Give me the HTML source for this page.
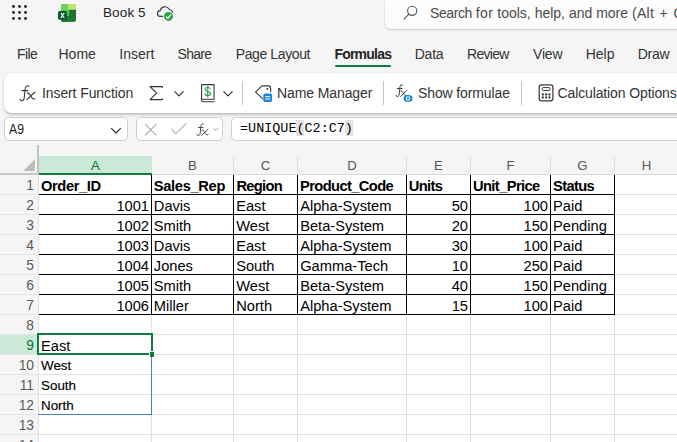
<!DOCTYPE html>
<html>
<head>
<meta charset="utf-8">
<style>
*{box-sizing:border-box;margin:0;padding:0}
html,body{width:677px;height:442px;overflow:hidden;background:#f5f5f5;font-family:"Liberation Sans",sans-serif;}
.abs{position:absolute}
#root{position:relative;width:677px;height:442px;overflow:hidden;background:#f5f5f5}
.t{position:absolute;white-space:nowrap;color:#242424;line-height:1}
.tab{font-size:14px;top:46.5px;color:#333}
.rb{font-size:14px;top:86px;color:#333;letter-spacing:-0.1px}
.ch{position:absolute;top:156px;height:18px;font-size:13.2px;color:#555;text-align:center;line-height:19px;padding-left:1px}
.rh{position:absolute;left:0;width:34px;text-align:right;font-size:13.8px;color:#5a5a5a;height:20px;line-height:21px}
.vl{position:absolute;width:1px;background:#e1e1e1;top:175px;height:270px}
.hl{position:absolute;height:1px;background:#e1e1e1;left:39px;width:640px}
.c{position:absolute;font-size:14.67px;color:#000;height:20px;line-height:22px;white-space:nowrap;transform:scaleY(1.045);transform-origin:0 16px}
.b{font-weight:bold;letter-spacing:-0.45px}
.r{text-align:right}
.bk{position:absolute;background:#000}
.s{font-size:13.4px;-webkit-text-stroke:0.15px #000;transform:none}
</style>
</head>
<body>
<div id="root">

<!-- title bar -->
<svg class="abs" style="left:10px;top:4.2px" width="20" height="18" viewBox="0 0 20 18">
 <g fill="#242424">
  <circle cx="3.5" cy="2.5" r="1.45"/><circle cx="9.5" cy="2.5" r="1.45"/><circle cx="15.5" cy="2.5" r="1.45"/>
  <circle cx="3.5" cy="8.5" r="1.45"/><circle cx="9.5" cy="8.5" r="1.45"/><circle cx="15.5" cy="8.5" r="1.45"/>
  <circle cx="3.5" cy="14.5" r="1.45"/><circle cx="9.5" cy="14.5" r="1.45"/><circle cx="15.5" cy="14.5" r="1.45"/>
 </g>
</svg>
<svg class="abs" style="left:50px;top:0px" width="40" height="26" viewBox="0 0 40 26">
 <defs><clipPath id="xc"><rect x="11" y="3.9" width="15.1" height="18" rx="2.6"/></clipPath>
 <linearGradient id="xg" x1="0" y1="0" x2="0" y2="1"><stop offset="0" stop-color="#1f6a2b"/><stop offset="1" stop-color="#1f7a2e"/></linearGradient></defs>
 <g clip-path="url(#xc)">
  <rect x="11" y="3.9" width="15.1" height="18" fill="url(#xg)"/>
  <rect x="11" y="3.9" width="8.2" height="12" fill="#4fbf4f"/>
  <rect x="11" y="3.9" width="7.2" height="6" fill="#6bd45f"/>
  <rect x="18.1" y="3.9" width="8" height="5.9" fill="#b8e96c"/>
  <rect x="11" y="16" width="8.2" height="6" fill="#1d7a2c"/>
 </g>
 <rect x="8" y="10.95" width="8.9" height="8.9" rx="1.9" fill="#0e5a38"/>
 <path d="M10.3 12.9 H11.6 L12.5 14.6 L13.4 12.9 H14.7 L13.2 15.4 L14.8 18 H13.5 L12.5 16.2 L11.5 18 H10.2 L11.8 15.4 Z" fill="#fff"/>
</svg>
<div class="t" style="left:103px;top:6.4px;font-size:13.5px;letter-spacing:0.12px;">Book 5</div>
<svg class="abs" style="left:150px;top:0px" width="40" height="26" viewBox="0 0 40 26">
 <path d="M12.8 16.4 H10.5 A2.9 2.9 0 0 1 10.2 10.6 A4.9 4.9 0 0 1 19.2 9.2 Q21.8 9.8 22.8 12.4" fill="none" stroke="#3d3d3d" stroke-width="1.15" stroke-linecap="round"/>
 <circle cx="18.5" cy="16.4" r="5" fill="#f5f5f5"/>
 <circle cx="18.5" cy="16.4" r="4.5" fill="#2ea44f"/>
 <path d="M16.4 17 L17.8 18.4 L20.6 14.9" fill="none" stroke="#fff" stroke-width="1.25" stroke-linecap="round" stroke-linejoin="round"/>
</svg>

<!-- search -->
<div class="abs" style="left:385px;top:-6px;width:300px;height:35px;background:#fcfcfc;border-radius:6px;box-shadow:0 1px 2px rgba(0,0,0,.16),0 0 2px rgba(0,0,0,.10)"></div>
<svg class="abs" style="left:401.8px;top:4.1px" width="18" height="18" viewBox="0 0 18 18">
 <circle cx="10.2" cy="6.8" r="4.6" fill="none" stroke="#555" stroke-width="1.1"/>
 <path d="M6.9 10.2 L2 15.2" stroke="#555" stroke-width="1.1" stroke-linecap="round"/>
</svg>
<div class="t" style="left:430px;top:6px;font-size:14px;color:#4a4a4a"><span style="letter-spacing:-0.4px">Search</span> <span style="letter-spacing:0.3px">for </span>tools, help, and more <span style="letter-spacing:0.3px;word-spacing:1.2px">(Alt + Q)</span></div>

<!-- tabs -->
<div class="t tab" style="left:17px;letter-spacing:-0.55px">File</div>
<div class="t tab" style="left:58.4px;letter-spacing:0.05px">Home</div>
<div class="t tab" style="left:119.3px">Insert</div>
<div class="t tab" style="left:177.5px;letter-spacing:-0.7px">Share</div>
<div class="t tab" style="left:235.7px;letter-spacing:-0.38px">Page Layout</div>
<div class="t tab" style="left:334.4px;font-weight:bold;color:#242424;letter-spacing:-0.78px">Formulas</div>
<div class="abs" style="left:334.5px;top:65px;width:56.5px;height:2px;background:#107c41;border-radius:1px"></div>
<div class="t tab" style="left:414.7px;letter-spacing:-0.2px">Data</div>
<div class="t tab" style="left:467px;letter-spacing:-0.7px">Review</div>
<div class="t tab" style="left:533px;letter-spacing:-0.2px">View</div>
<div class="t tab" style="left:585.7px">Help</div>
<div class="t tab" style="left:637.7px;letter-spacing:-0.25px">Draw</div>

<!-- ribbon -->
<div class="abs" style="left:4px;top:73px;width:690px;height:40px;background:#fff;border-radius:8px;box-shadow:0 1.5px 2.5px rgba(0,0,0,.2),0 0 1.5px rgba(0,0,0,.08)"></div>
<svg class="abs" style="left:14px;top:80px" width="30" height="26" viewBox="0 0 30 26"><g fill="none" stroke="#3a3a3a" stroke-width="1.1" stroke-linecap="round" stroke-linejoin="round"><path d="M14.8 6.5 C14.4 5.6 13 5.5 12.4 6.2 C11.5 7.1 11.2 8.3 11 10 L10.2 18 C10 20 9 20.9 7.6 20.6 C6.8 20.4 6.3 19.8 6.2 19.3"/><path d="M7.9 10.6 H13.8"/><path d="M13.2 12.9 C14.6 12.4 15.2 13.4 16.6 15.8 C18 18.4 19 19.8 20.9 18.8"/><path d="M20.9 12 L13 19.7"/></g></svg>
<div class="t rb" style="left:42px">Insert Function</div>
<svg class="abs" style="left:148px;top:84px" width="16" height="18" viewBox="0 0 16 18">
 <path d="M14.3 3.4 V2.6 H2 L8.6 9.1 L2 15.6 H14.3 V14.8" fill="none" stroke="#333" stroke-width="1.1" stroke-linejoin="round" stroke-linecap="round"/>
</svg>
<svg class="abs" style="left:173px;top:89px" width="12" height="10" viewBox="0 0 12 10"><path d="M1.8 2.6 L6 6.8 L10.2 2.6" fill="none" stroke="#333" stroke-width="1.2" stroke-linecap="round" stroke-linejoin="round"/></svg>

<svg class="abs" style="left:199px;top:83px" width="18" height="20" viewBox="0 0 18 20">
 <path d="M2.6 1.6 H15.1 V16.2 H2.6 Z M2.6 16 V17.2 Q2.6 18.7 4.2 18.7 H15.2" fill="none" stroke="#3a3a3a" stroke-width="1.1" stroke-linejoin="round" stroke-linecap="round"/>
 <g transform="translate(3.1,2.7) scale(0.98,0.92)" fill="none" stroke="#2aa14f" stroke-width="1.15" stroke-linecap="round">
  <path d="M8.3 3.7 C8 2.5 6.9 1.9 5.7 1.9 C4.2 1.9 3.1 2.7 3.1 4 C3.1 5.4 4.3 5.8 5.8 6.2 C7.4 6.6 8.6 7.1 8.6 8.6 C8.6 10 7.4 10.8 5.8 10.8 C4.3 10.8 3.1 10.1 2.9 8.8"/>
  <path d="M5.75 0.5 V12.2"/>
 </g>
</svg>
<svg class="abs" style="left:221.6px;top:89px" width="12" height="10" viewBox="0 0 12 10"><path d="M1.8 2.6 L6 6.8 L10.2 2.6" fill="none" stroke="#333" stroke-width="1.2" stroke-linecap="round" stroke-linejoin="round"/></svg>
<div class="abs" style="left:242px;top:81px;width:1px;height:24px;background:#c6c6c6"></div>

<svg class="abs" style="left:254px;top:83px" width="22" height="20" viewBox="0 0 22 20">
 <path d="M8.6 15.6 L1.6 9.2 L7.4 3.4 Q8 2.9 8.8 2.9 H14.2 Q16.6 2.9 16.6 5.3 V8.6" fill="none" stroke="#3a3a3a" stroke-width="1.15" stroke-linejoin="round" stroke-linecap="round"/>
 <circle cx="13.4" cy="6" r="0.95" fill="#3a3a3a"/>
 <rect x="9.3" y="10.6" width="8.8" height="8.4" rx="1.8" fill="#1a86d8"/>
 <rect x="11.2" y="13.2" width="5" height="1" fill="#fff"/>
 <rect x="11.2" y="15.5" width="5" height="1" fill="#fff"/>
</svg>
<div class="t rb" style="left:277px">Name Manager</div>
<div class="abs" style="left:383px;top:81px;width:1px;height:24px;background:#c6c6c6"></div>

<svg class="abs" style="left:391.2px;top:79.9px" width="24" height="20.8" viewBox="0 0 30 26"><g fill="none" stroke="#3a3a3a" stroke-width="1.25" stroke-linecap="round" stroke-linejoin="round"><path d="M14.8 6.5 C14.4 5.6 13 5.5 12.4 6.2 C11.5 7.1 11.2 8.3 11 10 L10.2 18 C10 20 9 20.9 7.6 20.6 C6.8 20.4 6.3 19.8 6.2 19.3"/><path d="M7.9 10.6 H13.8"/><g transform="translate(-0.9,0.8)"><path d="M13.2 12.9 C14.6 12.4 15.2 13.4 16.6 15.8 C18 18.4 19 19.8 20.9 18.8"/><path d="M20.9 12 L13 19.7"/></g></g></svg>
<svg class="abs" style="left:401.8px;top:93px" width="12" height="10" viewBox="0 0 12 10">
 <ellipse cx="6" cy="5.4" rx="4.5" ry="3.4" fill="#1a86d8"/>
 <circle cx="6" cy="5.4" r="2.2" fill="#fff"/>
 <circle cx="6" cy="5.4" r="1.2" fill="#1a86d8"/>
</svg>
<div class="t rb" style="left:418px;letter-spacing:-0.12px">Show formulae</div>
<div class="abs" style="left:521px;top:81px;width:1px;height:24px;background:#c6c6c6"></div>

<svg class="abs" style="left:537.3px;top:83px" width="18" height="20" viewBox="0 0 18 20">
 <rect x="2.2" y="1.9" width="13.7" height="15.9" rx="2.6" fill="none" stroke="#3a3a3a" stroke-width="1.25"/>
 <rect x="5.2" y="4.6" width="7.8" height="2.9" rx="1" fill="none" stroke="#3a3a3a" stroke-width="1"/>
 <g fill="#3a3a3a">
  <circle cx="5.8" cy="11.5" r="1.15"/><circle cx="9.1" cy="11.5" r="1.15"/><circle cx="12.4" cy="11.5" r="1.15"/>
  <circle cx="5.8" cy="14.5" r="1.15"/><circle cx="9.1" cy="14.5" r="1.15"/><circle cx="12.4" cy="14.5" r="1.15"/>
 </g>
</svg>
<div class="t rb" style="left:557.5px;letter-spacing:-0.12px">Calculation Options</div>

<!-- formula bar -->
<div class="abs" style="left:4px;top:117px;width:124px;height:24px;background:#fff;border:1px solid #cfcfcf;border-radius:4.5px"></div>
<div class="t" style="left:9px;top:121.8px;font-size:14.2px;color:#1f1f1f;transform:scaleX(0.86);transform-origin:0 0">A9</div>
<svg class="abs" style="left:109.7px;top:125.7px" width="12" height="10" viewBox="0 0 12 10"><path d="M1.4 2.4 L6 7 L10.6 2.4" fill="none" stroke="#333" stroke-width="1.2" stroke-linecap="round" stroke-linejoin="round"/></svg>

<div class="abs" style="left:136px;top:117px;width:87px;height:24px;background:#fff;border:1px solid #cfcfcf;border-radius:4.5px"></div>
<svg class="abs" style="left:144px;top:122.6px" width="14" height="14" viewBox="0 0 14 14"><path d="M1.5 1.5 L12 12 M12 1.5 L1.5 12" stroke="#b4b4b4" stroke-width="1.2" stroke-linecap="round"/></svg>
<svg class="abs" style="left:170px;top:122px" width="18" height="14" viewBox="0 0 18 14"><path d="M1.5 7.2 L5.8 11.6 L16 1.8" fill="none" stroke="#b4b4b4" stroke-width="1.2" stroke-linecap="round" stroke-linejoin="round"/></svg>
<svg class="abs" style="left:192.4px;top:118.6px" width="24" height="20.8" viewBox="0 0 30 26"><g fill="none" stroke="#4a4a4a" stroke-width="1.25" stroke-linecap="round" stroke-linejoin="round"><path d="M14.8 6.5 C14.4 5.6 13 5.5 12.4 6.2 C11.5 7.1 11.2 8.3 11 10 L10.2 18 C10 20 9 20.9 7.6 20.6 C6.8 20.4 6.3 19.8 6.2 19.3"/><path d="M7.9 10.6 H13.8"/><g transform="translate(-0.9,0.8)"><path d="M13.2 12.9 C14.6 12.4 15.2 13.4 16.6 15.8 C18 18.4 19 19.8 20.9 18.8"/><path d="M20.9 12 L13 19.7"/></g></g></svg>
<svg class="abs" style="left:212px;top:126px" width="8" height="7" viewBox="0 0 8 7"><path d="M1.6 2 L4 4.4 L6.4 2" fill="none" stroke="#9a9a9a" stroke-width="1" stroke-linecap="round" stroke-linejoin="round"/></svg>

<div class="abs" style="left:231px;top:117px;width:460px;height:24px;background:#fff;border:1px solid #cfcfcf;border-radius:4.5px"></div>
<div class="abs" style="left:296.3px;top:120px;width:8px;height:15.5px;background:#e3e3e3"></div>
<div class="abs" style="left:345px;top:120px;width:8px;height:15.5px;background:#e3e3e3"></div>
<div class="t" style="left:240px;top:122px;font-family:'Liberation Mono',monospace;font-size:13.45px;color:#000">=UNIQUE(C2:C7)</div>

<!-- grid -->
<div class="abs" style="left:39px;top:175px;width:640px;height:270px;background:#fff"></div>
<div class="abs" style="left:37px;top:145px;width:2px;height:30px;background:#c2c2c2"></div>
<div class="abs" style="left:38px;top:175px;width:1px;height:270px;background:#e0e0e0"></div>
<div class="abs" style="left:0;top:173px;width:39px;height:2px;background:#c6c6c6"></div>
<div class="abs" style="left:151px;top:174px;width:530px;height:1px;background:#d8d8d8"></div>
<svg class="abs" style="left:22px;top:158px" width="14" height="14" viewBox="0 0 14 14"><path d="M12.9 1.3 V12.9 H1.2 Z" fill="#bcbcbc"/></svg>

<!-- column headers -->
<div class="abs" style="left:39px;top:156px;width:113px;height:17px;background:#cbe9d8"></div>
<div class="abs" style="left:39px;top:173px;width:113px;height:2px;background:#107c41"></div>
<div class="ch" style="left:39px;width:112px;color:#0e6f3a">A</div>
<div class="ch" style="left:151px;width:82px">B</div>
<div class="ch" style="left:233px;width:64px">C</div>
<div class="ch" style="left:297px;width:109px">D</div>
<div class="ch" style="left:406px;width:64px">E</div>
<div class="ch" style="left:470px;width:80px">F</div>
<div class="ch" style="left:550px;width:64px">G</div>
<div class="ch" style="left:614px;width:64px">H</div>
<div class="abs" style="left:233px;top:157px;width:1px;height:17px;background:#dedede"></div>
<div class="abs" style="left:297px;top:157px;width:1px;height:17px;background:#dedede"></div>
<div class="abs" style="left:406px;top:157px;width:1px;height:17px;background:#dedede"></div>
<div class="abs" style="left:470px;top:157px;width:1px;height:17px;background:#dedede"></div>
<div class="abs" style="left:550px;top:157px;width:1px;height:17px;background:#dedede"></div>
<div class="abs" style="left:614px;top:157px;width:1px;height:17px;background:#dedede"></div>

<!-- row headers -->
<div class="abs" style="left:0;top:334px;width:38px;height:21px;background:#cbe9d8"></div>
<div class="rh" style="top:175px">1</div>
<div class="rh" style="top:195px">2</div>
<div class="rh" style="top:215px">3</div>
<div class="rh" style="top:235px">4</div>
<div class="rh" style="top:255px">5</div>
<div class="rh" style="top:275px">6</div>
<div class="rh" style="top:295px">7</div>
<div class="rh" style="top:315px">8</div>
<div class="rh" style="top:335px;color:#0e6f3a">9</div>
<div class="rh" style="top:355px">10</div>
<div class="rh" style="top:375px">11</div>
<div class="rh" style="top:395px">12</div>
<div class="rh" style="top:415px">13</div>
<div class="rh" style="top:435px">14</div>

<!-- grid lines -->
<div class="vl" style="left:151px"></div>
<div class="vl" style="left:233px"></div>
<div class="vl" style="left:297px"></div>
<div class="vl" style="left:406px"></div>
<div class="vl" style="left:470px"></div>
<div class="vl" style="left:550px"></div>
<div class="vl" style="left:614px"></div>
<div class="hl" style="top:194px"></div>
<div class="hl" style="top:214px"></div>
<div class="hl" style="top:234px"></div>
<div class="hl" style="top:254px"></div>
<div class="hl" style="top:274px"></div>
<div class="hl" style="top:294px"></div>
<div class="hl" style="top:314px"></div>
<div class="hl" style="top:334px"></div>
<div class="hl" style="top:354px"></div>
<div class="hl" style="top:374px"></div>
<div class="hl" style="top:394px"></div>
<div class="hl" style="top:414px"></div>
<div class="hl" style="top:434px"></div>
<div class="abs" style="left:0;top:194px;width:38px;height:1px;background:#e4e4e4"></div>
<div class="abs" style="left:0;top:214px;width:38px;height:1px;background:#e4e4e4"></div>
<div class="abs" style="left:0;top:234px;width:38px;height:1px;background:#e4e4e4"></div>
<div class="abs" style="left:0;top:254px;width:38px;height:1px;background:#e4e4e4"></div>
<div class="abs" style="left:0;top:274px;width:38px;height:1px;background:#e4e4e4"></div>
<div class="abs" style="left:0;top:294px;width:38px;height:1px;background:#e4e4e4"></div>
<div class="abs" style="left:0;top:314px;width:38px;height:1px;background:#e4e4e4"></div>
<div class="abs" style="left:0;top:334px;width:38px;height:1px;background:#e4e4e4"></div>
<div class="abs" style="left:0;top:354px;width:38px;height:1px;background:#e4e4e4"></div>
<div class="abs" style="left:0;top:374px;width:38px;height:1px;background:#e4e4e4"></div>
<div class="abs" style="left:0;top:394px;width:38px;height:1px;background:#e4e4e4"></div>
<div class="abs" style="left:0;top:414px;width:38px;height:1px;background:#e4e4e4"></div>
<div class="abs" style="left:0;top:434px;width:38px;height:1px;background:#e4e4e4"></div>

<!-- black table borders -->
<div class="bk" style="left:39px;top:194px;width:576px;height:1px"></div>
<div class="bk" style="left:39px;top:214px;width:576px;height:1px"></div>
<div class="bk" style="left:39px;top:234px;width:576px;height:1px"></div>
<div class="bk" style="left:39px;top:254px;width:576px;height:1px"></div>
<div class="bk" style="left:39px;top:274px;width:576px;height:1px"></div>
<div class="bk" style="left:39px;top:294px;width:576px;height:1px"></div>
<div class="bk" style="left:39px;top:314px;width:576px;height:1px"></div>
<div class="bk" style="left:151px;top:175px;width:1px;height:140px"></div>
<div class="bk" style="left:233px;top:175px;width:1px;height:140px"></div>
<div class="bk" style="left:297px;top:175px;width:1px;height:140px"></div>
<div class="bk" style="left:406px;top:175px;width:1px;height:140px"></div>
<div class="bk" style="left:470px;top:175px;width:1px;height:140px"></div>
<div class="bk" style="left:550px;top:175px;width:1px;height:140px"></div>
<div class="bk" style="left:614px;top:175px;width:1px;height:140px"></div>

<!-- cells -->
<div class="c b" style="left:41px;top:175px;letter-spacing:-0.37px">Order_ID</div>
<div class="c b" style="left:153.8px;top:175px;letter-spacing:-0.32px">Sales_Rep</div>
<div class="c b" style="left:236.4px;top:175px;letter-spacing:-0.68px">Region</div>
<div class="c b" style="left:300px;top:175px;letter-spacing:-0.59px">Product_Code</div>
<div class="c b" style="left:408.8px;top:175px;letter-spacing:-0.62px">Units</div>
<div class="c b" style="left:473px;top:175px;letter-spacing:-0.59px">Unit_Price</div>
<div class="c b" style="left:553px;top:175px;letter-spacing:-0.63px">Status</div>

<div class="c r" style="left:39px;width:110px;top:195px">1001</div>
<div class="c" style="left:153.8px;top:195px">Davis</div>
<div class="c" style="left:236.2px;top:195px">East</div>
<div class="c" style="left:300.2px;top:195px">Alpha-System</div>
<div class="c r" style="left:406px;width:62px;top:195px">50</div>
<div class="c r" style="left:470px;width:78px;top:195px">100</div>
<div class="c" style="left:553px;top:195px">Paid</div>

<div class="c r" style="left:39px;width:110px;top:215px">1002</div>
<div class="c" style="left:153.8px;top:215px">Smith</div>
<div class="c" style="left:236.2px;top:215px">West</div>
<div class="c" style="left:300.2px;top:215px">Beta-System</div>
<div class="c r" style="left:406px;width:62px;top:215px">20</div>
<div class="c r" style="left:470px;width:78px;top:215px">150</div>
<div class="c" style="left:553px;top:215px">Pending</div>

<div class="c r" style="left:39px;width:110px;top:235px">1003</div>
<div class="c" style="left:153.8px;top:235px">Davis</div>
<div class="c" style="left:236.2px;top:235px">East</div>
<div class="c" style="left:300.2px;top:235px">Alpha-System</div>
<div class="c r" style="left:406px;width:62px;top:235px">30</div>
<div class="c r" style="left:470px;width:78px;top:235px">100</div>
<div class="c" style="left:553px;top:235px">Paid</div>

<div class="c r" style="left:39px;width:110px;top:255px">1004</div>
<div class="c" style="left:153.8px;top:255px">Jones</div>
<div class="c" style="left:236.2px;top:255px">South</div>
<div class="c" style="left:300.2px;top:255px">Gamma-Tech</div>
<div class="c r" style="left:406px;width:62px;top:255px">10</div>
<div class="c r" style="left:470px;width:78px;top:255px">250</div>
<div class="c" style="left:553px;top:255px">Paid</div>

<div class="c r" style="left:39px;width:110px;top:275px">1005</div>
<div class="c" style="left:153.8px;top:275px">Smith</div>
<div class="c" style="left:236.2px;top:275px">West</div>
<div class="c" style="left:300.2px;top:275px">Beta-System</div>
<div class="c r" style="left:406px;width:62px;top:275px">40</div>
<div class="c r" style="left:470px;width:78px;top:275px">150</div>
<div class="c" style="left:553px;top:275px">Pending</div>

<div class="c r" style="left:39px;width:110px;top:295px">1006</div>
<div class="c" style="left:153.8px;top:295px">Miller</div>
<div class="c" style="left:236.2px;top:295px">North</div>
<div class="c" style="left:300.2px;top:295px">Alpha-System</div>
<div class="c r" style="left:406px;width:62px;top:295px">15</div>
<div class="c r" style="left:470px;width:78px;top:295px">100</div>
<div class="c" style="left:553px;top:295px">Paid</div>

<div class="c" style="left:41px;top:334.6px">East</div>
<div class="c s" style="left:41px;top:355px">West</div>
<div class="c s" style="left:41px;top:375px">South</div>
<div class="c s" style="left:41px;top:395px">North</div>

<!-- spill border + selection -->
<div class="abs" style="left:38px;top:334px;width:114px;height:81px;border:1px solid #4a7ec4;border-top:none;border-left:none"></div>
<div class="abs" style="left:37px;top:333px;width:116px;height:22px;border:2px solid #107c41"></div>
<div class="abs" style="left:149px;top:351px;width:5px;height:6px;background:#107c41;border:1px solid #fff;border-right:none;border-bottom:none"></div>

</div>
</body>
</html>
